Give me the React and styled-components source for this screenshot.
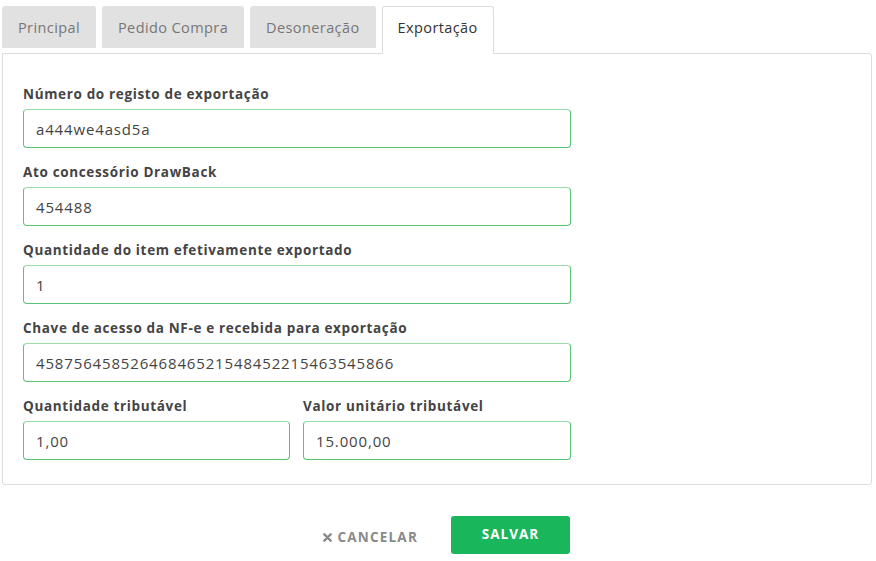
import React from 'react';
import styled, { createGlobalStyle } from 'styled-components';

const GlobalStyle = createGlobalStyle`
  body {
    margin: 0;
    background: #fff;
    font-family: "Open Sans", "Liberation Sans", sans-serif;
  }
`;

const Page = styled.div`
  padding: 6px 4px 0 2px;
`;

const TabBar = styled.div`
  display: flex;
  gap: 6px;
  position: relative;
  z-index: 1;
`;

const Tab = styled.div`
  box-sizing: border-box;
  height: ${(p) => (p.active ? '48px' : '42px')};
  padding: 0 15px;
  display: flex;
  align-items: center;
  padding-bottom: ${(p) => (p.active ? '6px' : '0')};
  font-size: 14.5px;
  letter-spacing: 0.4px;
  color: ${(p) => (p.active ? '#333' : '#777')};
  background: ${(p) => (p.active ? '#fff' : '#e1e1e1')};
  border: 1px solid ${(p) => (p.active ? '#ddd' : '#e1e1e1')};
  border-bottom: none;
  border-radius: 3px 3px 0 0;
`;

const Panel = styled.div`
  margin-top: -1px;
  border: 1px solid #ddd;
  border-radius: 0 3px 3px 3px;
  padding: 31px 20px 24px;
`;

const Form = styled.div`
  width: 548px;
`;

const Field = styled.div`
  margin-bottom: ${(p) => (p.last ? '0' : '15px')};
`;

const Label = styled.div`
  font-size: 13.5px;
  font-weight: 700;
  line-height: 18px;
  letter-spacing: 0.65px;
  color: #444;
  margin-bottom: 6px;
`;

const Input = styled.input`
  box-sizing: border-box;
  width: 100%;
  height: 39px;
  padding: 0 12px;
  font-family: inherit;
  font-size: 15px;
  letter-spacing: 0.85px;
  color: #444;
  border: 1px solid #58c474;
  border-top-color: #9bdcab;
  border-radius: 4px;
  outline: none;
  background: #fff;
`;

const Row = styled.div`
  display: grid;
  grid-template-columns: 267px 268px;
  gap: 13px;
`;

const Actions = styled.div`
  width: 548px;
  margin: 31px 0 0 20px;
  display: flex;
  justify-content: flex-end;
  align-items: center;
  gap: 33px;
`;

const CancelButton = styled.button`
  background: none;
  border: none;
  padding: 0;
  margin-top: 4px;
  display: flex;
  align-items: center;
  gap: 5px;
  font-family: inherit;
  font-size: 13.5px;
  font-weight: 700;
  letter-spacing: 1.2px;
  color: #8a8a8a;
`;

const SaveButton = styled.button`
  width: 119px;
  height: 38px;
  border: none;
  border-radius: 3px;
  background: #1ab65c;
  color: #fff;
  font-family: inherit;
  font-size: 13.5px;
  font-weight: 700;
  letter-spacing: 1px;
  padding-bottom: 4px;
`;

const fields = [
  ['Número do registo de exportação', 'a444we4asd5a'],
  ['Ato concessório DrawBack', '454488'],
  ['Quantidade do item efetivamente exportado', '1'],
  ['Chave de acesso da NF-e e recebida para exportação', '45875645852646846521548452215463545866'],
];

export default function App() {
  return (
    <Page>
      <GlobalStyle />
      <TabBar>
        <Tab>Principal</Tab>
        <Tab>Pedido Compra</Tab>
        <Tab>Desoneração</Tab>
        <Tab active>Exportação</Tab>
      </TabBar>
      <Panel>
        <Form>
          {fields.map(([label, value]) => (
            <Field key={label}>
              <Label>{label}</Label>
              <Input defaultValue={value} />
            </Field>
          ))}
          <Row>
            <Field last>
              <Label>Quantidade tributável</Label>
              <Input defaultValue="1,00" />
            </Field>
            <Field last>
              <Label>Valor unitário tributável</Label>
              <Input defaultValue="15.000,00" />
            </Field>
          </Row>
        </Form>
      </Panel>
      <Actions>
        <CancelButton>
          <svg width="9" height="9" viewBox="0 0 10 10">
            <path d="M1.5 1.5 L8.5 8.5 M8.5 1.5 L1.5 8.5" stroke="#8a8a8a" strokeWidth="2.6" strokeLinecap="round" />
          </svg>
          CANCELAR
        </CancelButton>
        <SaveButton>SALVAR</SaveButton>
      </Actions>
    </Page>
  );
}
